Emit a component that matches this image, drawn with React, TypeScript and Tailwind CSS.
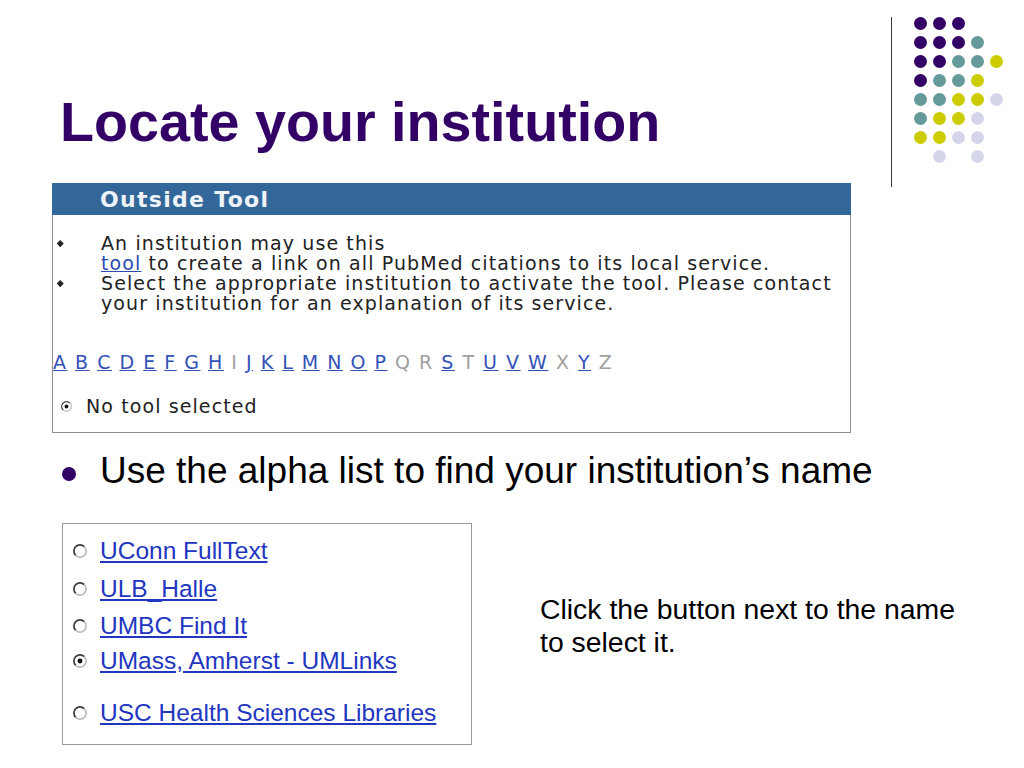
import React from "react";

const dotRows = ["ppp__", "pppt_", "pptty", "ptty_", "ttyyl", "tyyl_", "yyll_", "_l_l_"];

const dotColor: Record<string, string> = {
    p: "bg-[#330066]",
    t: "bg-[#669999]",
    y: "bg-[#cccc00]",
    l: "bg-[#d6d6ea]",
    _: "bg-transparent",
};

const letters = "ABCDEFGHIJKLMNOPQRSTUVWXYZ".split("");
const noLink = "IQRTXZ";

const institutions = [
    { name: "UConn FullText", gap: "mt-0", checked: false },
    { name: "ULB_Halle", gap: "mt-[10px]", checked: false },
    { name: "UMBC Find It", gap: "mt-[9px]", checked: false },
    { name: "UMass, Amherst - UMLinks", gap: "mt-[7px]", checked: true },
    { name: "USC Health Sciences Libraries", gap: "mt-[24px]", checked: false },
];

function Radio({ checked, size }: { checked: boolean; size: number }) {
    return (
        <svg viewBox="0 0 13 13" width={size} height={size} className="shrink-0 block">
            <circle cx="6.5" cy="6.5" r="5.6" fill="#fff" />
            <path d="M2.5 10.5 A5.6 5.6 0 0 1 10.5 2.5" fill="none" stroke="#3c3c3c" strokeWidth="1.6" />
            <path d="M10.5 2.5 A5.6 5.6 0 0 1 2.5 10.5" fill="none" stroke="#bdbdbd" strokeWidth="1.6" />
            {checked && <circle cx="6.5" cy="6.5" r="2.3" fill="#111" />}
        </svg>
    );
}

function Diamond() {
    return <span className="block w-[4.5px] h-[4.5px] rotate-45 bg-[#222]" />;
}

export default function App() {
    return (
        <main className="w-[1024px] h-[768px] bg-white overflow-hidden font-['Liberation_Sans',Arial,sans-serif]">
            {/* title + template decoration */}
            <div className="flex h-[183px]">
                <h1 className="pl-[60px] pt-[95px] text-[55.7px] leading-none font-bold text-[#330066] whitespace-nowrap">
                    Locate your institution
                </h1>
                <div className="ml-auto mr-[21px] flex items-start pt-[17px]">
                    <div className="w-px h-[170px] bg-[#3a3a3a]" />
                    <div className="ml-[22px] grid grid-cols-[repeat(5,13px)] gap-[6px]">
                        {dotRows.map((row, r) =>
                            row.split("").map((c, i) => (
                                <span key={r + "-" + i} className={"w-[13px] h-[13px] rounded-full " + dotColor[c]} />
                            ))
                        )}
                    </div>
                </div>
            </div>

            {/* Outside Tool panel */}
            <div className="ml-[52px] w-[799px] flex flex-col font-['DejaVu_Sans',Verdana,sans-serif]">
                <div className="h-[32px] bg-[#336699] flex items-center pl-[48px]">
                    <span className="text-[22px] font-bold tracking-[1.3px] text-[#eef3f8]">Outside Tool</span>
                </div>
                <div className="h-[218px] border-x border-b border-[#8f8f8f] pt-[18px] text-[19px] leading-[20px] tracking-[1.1px] text-[#222] whitespace-nowrap">
                    <div className="flex">
                        <div className="w-[48px] pl-[5px] pt-[8px]"><Diamond /></div>
                        <div>
                            An institution may use this<br />
                            <a className="text-[#2b4bb0] underline">tool</a> to create a link on all PubMed citations to its local service.
                        </div>
                    </div>
                    <div className="flex">
                        <div className="w-[48px] pl-[5px] pt-[8px]"><Diamond /></div>
                        <div>
                            Select the appropriate institution to activate the tool. Please contact<br />
                            your institution for an explanation of its service.
                        </div>
                    </div>

                    <div className="mt-[39px] tracking-[1.5px]">
                        {letters.map((l, i) => (
                            <React.Fragment key={l}>
                                {noLink.includes(l) ? (
                                    <span className="text-[#a0a0a0]">{l}</span>
                                ) : (
                                    <a className="text-[#3352b8] underline">{l}</a>
                                )}
                                {i < letters.length - 1 ? " " : ""}
                            </React.Fragment>
                        ))}
                    </div>

                    <div className="mt-[24px] flex items-center pl-[8px]">
                        <Radio checked size={11} />
                        <span className="ml-[14px]">No tool selected</span>
                    </div>
                </div>
            </div>

            {/* bullet */}
            <div className="mt-[16px] flex items-start h-[44px]">
                <span className="ml-[62px] mt-[18px] w-[14px] h-[14px] rounded-full bg-[#330066]" />
                <p className="ml-[24px] text-[37px] leading-[44px] text-black whitespace-nowrap">
                    Use the alpha list to find your institution’s name
                </p>
            </div>

            {/* institution list + note */}
            <div className="mt-[30px] flex items-start">
                <div className="ml-[62px] w-[410px] h-[222px] border border-[#9a9a9a] pt-[13px] pl-[10px]">
                    {institutions.map((it) => (
                        <div key={it.name} className={"flex items-center h-[28px] " + it.gap}>
                            <Radio checked={it.checked} size={14} />
                            <a className="ml-[13px] text-[24.5px] leading-[28px] text-[#2236c0] underline whitespace-nowrap">
                                {it.name}
                            </a>
                        </div>
                    ))}
                </div>
                <p className="ml-[68px] mt-[70px] text-[28.4px] leading-[33px] text-black whitespace-nowrap">
                    Click the button next to the name<br />
                    to select it.
                </p>
            </div>
        </main>
    );
}
